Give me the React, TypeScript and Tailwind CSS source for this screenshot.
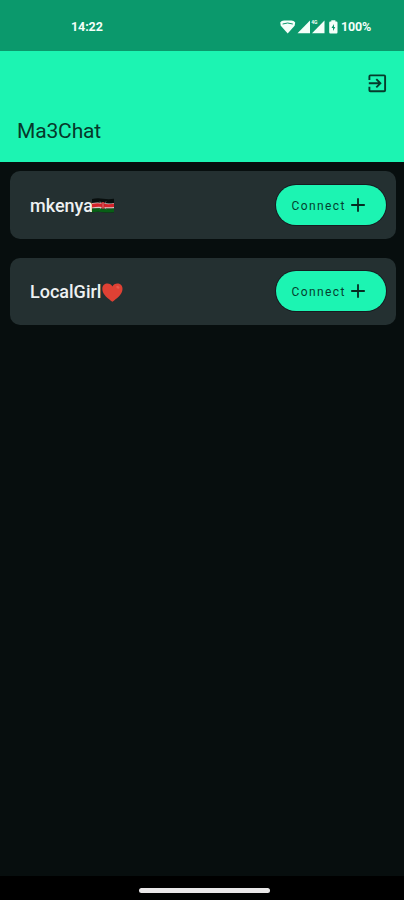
import type { ReactNode } from "react";

function StatusIcons() {
  return (
    <svg width="61" height="16" viewBox="280 18 61 16" fill="#f4fff9">
      <path d="M280.2 21.4Q281.4 19.6 284 19.6H291.4Q294 19.6 295.2 21.4L294.6 24.8L287.7 32.4L280.8 24.8Z" />
      <path d="M282.6 23Q287.6 21 292.8 23" fill="none" stroke="#0b996c" strokeWidth="1" />
      <path d="M310 19.6V32.2H297.5Z" />
      <path d="M324.5 19.6V32.2H312Z" />
      <text x="311.2" y="23.2" fontSize="5" fontWeight="700" fontFamily="Roboto, sans-serif">4G</text>
      <path d="M331.3 19.3H335.4V20.6H336.4Q337.5 20.6 337.5 21.8V31.3Q337.5 32.5 336.4 32.5H330.3Q329.2 32.5 329.2 31.3V21.8Q329.2 20.6 330.3 20.6H331.3Z" />
      <path d="M334 23L331.5 27H333V30L335.3 26H334Z" fill="#0b996c" />
    </svg>
  );
}

function ExitIcon() {
  return (
    <svg width="20" height="20" viewBox="0 0 20 20" fill="none" stroke="#063b2c" strokeWidth="1.9">
      <path d="M2.4 6.9V3.4Q2.4 2.4 3.4 2.4H17.1Q18.1 2.4 18.1 3.4V17.2Q18.1 18.2 17.1 18.2H3.4Q2.4 18.2 2.4 17.2V13.7" />
      <path d="M1.8 10.3H13M9.3 6.2L13.4 10.3L9.3 14.4" />
    </svg>
  );
}

function KenyaFlag() {
  return (
    <svg className="-ml-px -mt-px" width="22" height="15" viewBox="0 0 22 15">
      <path d="M0 1Q5 -.2 11 .7T22 .7V14.2Q17 15 11 14.2T0 14.5Z" fill="#080e0d" />
      <path d="M0 5.1Q5 4.1 11 5T22 4.9V10.4H0Z" fill="#d8cdc8" />
      <path d="M0 5.8Q5 4.8 11 5.7T22 5.6V9.1Q17 9.6 11 9T0 9.4Z" fill="#d4222a" />
      <path d="M0 10.7Q5 9.8 11 10.4T22 10.4V14.2Q17 15 11 14.2T0 14.5Z" fill="#085f16" />
      <path d="M8 3.5L14 11.2M14 3.5L8 11.2" stroke="#d4b8b3" strokeWidth=".5" />
      <ellipse cx="11" cy="7.3" rx="1.9" ry="3.4" fill="#c92027" />
      <path d="M11 4.4V10.2" stroke="#e3c8c4" strokeWidth=".5" />
    </svg>
  );
}

function Heart() {
  return (
    <svg className="ml-px" width="21" height="19" viewBox="0 0 21 19">
      <path d="M10.4 3.4C12.2-.6 20.5-.9 20.5 5.9C20.5 11.5 14.2 15.8 10.4 18.7C6.6 15.8.3 11.5.3 5.9C.3-.9 8.7-.6 10.4 3.4Z" fill="#df4134" />
      <ellipse cx="15.9" cy="4.3" rx="1.8" ry="1.2" transform="rotate(35 15.9 4.3)" fill="#e6594b" />
    </svg>
  );
}

function UserCard({ name, emoji }: { name: string; emoji: ReactNode }) {
  return (
    <div className="flex h-[67.5px] items-center justify-between rounded-[10px] bg-[#243031] pl-5 pr-[10px]">
      <div className="flex items-center pt-[2px]">
        <span className="whitespace-nowrap text-[18px] font-medium leading-6 text-[#eef1f1]">{name}</span>
        {emoji}
      </div>
      <button className="flex h-10 w-[110px] items-center rounded-full bg-[#1cf4b2] pl-4 ring-1 ring-[#151c20]">
        <span className="w-[58px] whitespace-nowrap pt-[2px] text-left text-[12px] font-normal leading-4 tracking-[1.4px] text-[#043f2f]">Connect</span>
        <svg width="16" height="16" viewBox="0 0 16 16" stroke="#062c22" strokeWidth="1.8">
          <path d="M1.2 8H14.8M8 1.2V14.8" />
        </svg>
      </button>
    </div>
  );
}

export default function App() {
  return (
    <div className="flex h-[900px] w-[404px] flex-col overflow-hidden bg-[#070e0e] font-['Roboto',sans-serif]">
      <div className="flex h-[51px] shrink-0 items-center justify-between bg-[#0b996c] pl-[71px] pr-[31px] pt-[3px] text-[12.5px] font-bold text-[#f4fff9]">
        <span className="tracking-[-0.1px]">14:22</span>
        <div className="flex items-center">
          <StatusIcons />
          <span className="w-8 whitespace-nowrap tracking-[-0.2px]">100%</span>
        </div>
      </div>
      <header className="flex h-[111px] shrink-0 flex-col justify-between bg-[#1cf4b2] pb-[17px] pl-[17px] pr-[17px] pt-[22px]">
        <div className="flex justify-end"><ExitIcon /></div>
        <h1 className="text-[21px] leading-7 tracking-[-0.15px] text-[#06382a]">Ma3Chat</h1>
      </header>
      <main className="flex flex-1 flex-col gap-[19px] pl-[10px] pr-[8.5px] pt-[9px]">
        <UserCard name="mkenya" emoji={<KenyaFlag />} />
        <UserCard name="LocalGirl" emoji={<Heart />} />
      </main>
      <div className="flex h-6 shrink-0 justify-center bg-black pl-1 pt-3">
        <div className="h-[5px] w-[131px] rounded-full bg-[#e9e7e8]" />
      </div>
    </div>
  );
}
